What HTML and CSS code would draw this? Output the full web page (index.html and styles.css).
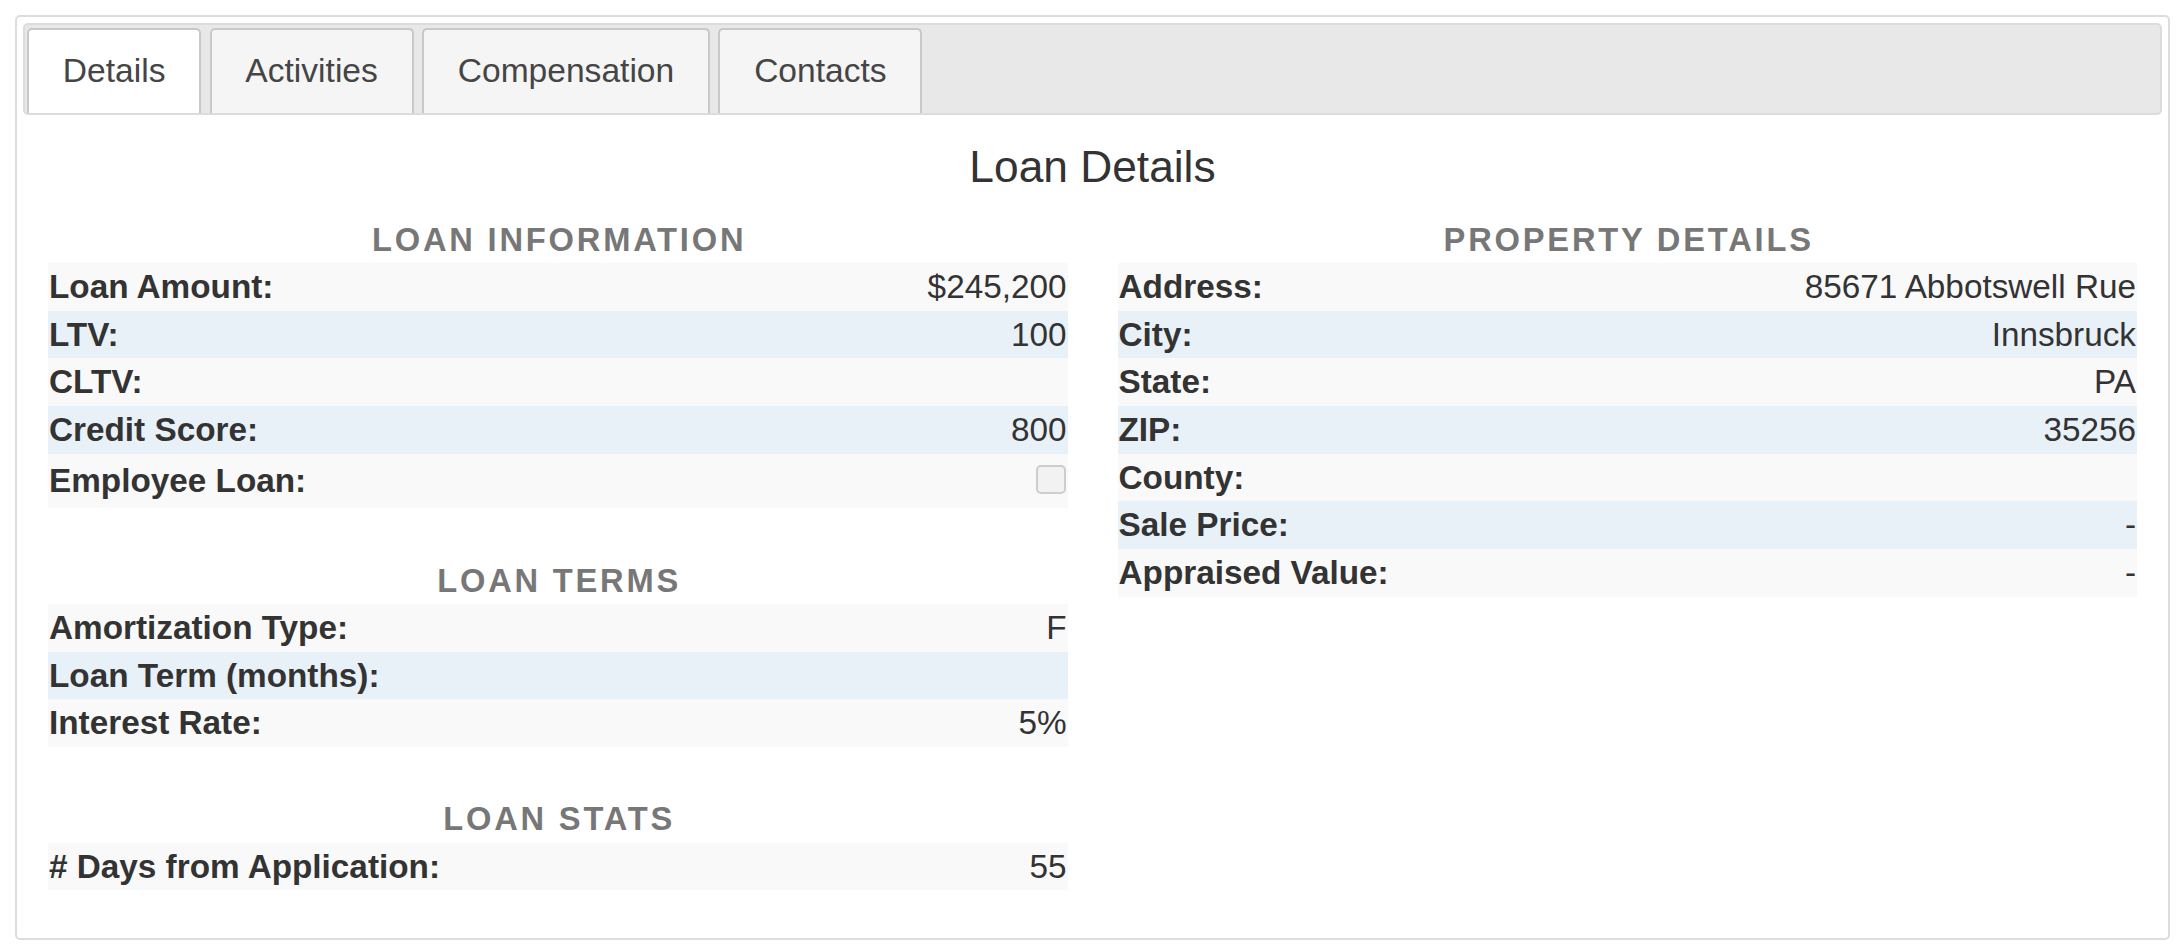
FILE: index.html
```html
<!DOCTYPE html>
<html lang="en">
<head>
<meta charset="utf-8">
<title>Loan Details</title>
<link rel="stylesheet" href="styles.css">
</head>
<body>
<div class="panel">
  <ul class="tabs">
    <li class="tab active">Details</li>
    <li class="tab">Activities</li>
    <li class="tab">Compensation</li>
    <li class="tab">Contacts</li>
  </ul>
  <div class="tab-body">
    <h2 class="title">Loan Details</h2>
    <div class="cols">
      <div class="col">
        <section class="group">
          <h3 class="group-title">LOAN INFORMATION</h3>
          <div class="rows">
            <div class="row"><span class="label">Loan Amount:</span><span class="value">$245,200</span></div>
            <div class="row"><span class="label">LTV:</span><span class="value">100</span></div>
            <div class="row"><span class="label">CLTV:</span><span class="value"></span></div>
            <div class="row"><span class="label">Credit Score:</span><span class="value">800</span></div>
            <div class="row"><span class="label">Employee Loan:</span><span class="checkbox"></span></div>
          </div>
        </section>
        <section class="group">
          <h3 class="group-title">LOAN TERMS</h3>
          <div class="rows">
            <div class="row"><span class="label">Amortization Type:</span><span class="value">F</span></div>
            <div class="row"><span class="label">Loan Term (months):</span><span class="value"></span></div>
            <div class="row"><span class="label">Interest Rate:</span><span class="value">5%</span></div>
          </div>
        </section>
        <section class="group">
          <h3 class="group-title">LOAN STATS</h3>
          <div class="rows">
            <div class="row"><span class="label"># Days from Application:</span><span class="value">55</span></div>
          </div>
        </section>
      </div>
      <div class="col">
        <section class="group">
          <h3 class="group-title">PROPERTY DETAILS</h3>
          <div class="rows">
            <div class="row"><span class="label">Address:</span><span class="value">85671 Abbotswell Rue</span></div>
            <div class="row"><span class="label">City:</span><span class="value">Innsbruck</span></div>
            <div class="row"><span class="label">State:</span><span class="value">PA</span></div>
            <div class="row"><span class="label">ZIP:</span><span class="value">35256</span></div>
            <div class="row"><span class="label">County:</span><span class="value"></span></div>
            <div class="row"><span class="label">Sale Price:</span><span class="value">-</span></div>
            <div class="row"><span class="label">Appraised Value:</span><span class="value">-</span></div>
          </div>
        </section>
      </div>
    </div>
  </div>
</div>
</body>
</html>
```

FILE: styles.css
```css
* {
  box-sizing: border-box;
}

body {
  margin: 0;
  font-family: "Liberation Sans", Arial, Helvetica, sans-serif;
  color: #333;
  background: #fff;
}

.panel {
  margin: 15px 8px 0 15px;
  height: 925px;
  border: 2px solid #ddd;
  border-radius: 5px;
  padding: 6px;
}

.tabs {
  list-style: none;
  margin: 0;
  padding: 3px 2px 0;
  height: 92px;
  display: flex;
  gap: 8.3px;
  background: #e8e8e8;
  border: 2px solid #dcdcdc;
  border-radius: 5px;
}

.tab {
  height: 85px;
  padding: 22px 33.8px 23px;
  font-size: 33.6px;
  line-height: 38px;
  color: #454545;
  background: #f5f5f5;
  border: 2px solid #c8c8c8;
  border-bottom: 0;
  border-radius: 5px 5px 0 0;
  white-space: nowrap;
}

.tab.active {
  background: #fff;
}

.title {
  margin: 26px 0 0;
  font-size: 44.3px;
  line-height: 51px;
  font-weight: normal;
  text-align: center;
  color: #333;
}

.cols {
  display: grid;
  grid-template-columns: 1fr 1fr;
  margin-top: 28.8px;
}

.col {
  padding: 0 25px;
}

.group {
  margin-bottom: 53.5px;
}

.group-title {
  margin: 0 0 4.2px;
  padding-left: 2.8px;
  font-size: 32.67px;
  line-height: 38px;
  font-weight: bold;
  letter-spacing: 2.8px;
  color: #777;
  text-align: center;
}

.row {
  display: flex;
  justify-content: space-between;
  align-items: center;
  min-height: 47.67px;
  padding: 0 1px;
  font-size: 33.3px;
  line-height: 47.67px;
  background: #f9f9f9;
}

.row:nth-child(even) {
  background: #e9f1f8;
}

.label {
  font-weight: bold;
  color: #333;
}

.value {
  color: #333;
}

.checkbox {
  width: 30px;
  height: 29px;
  margin: 11px 1px 14.5px 0;
  border: 2px solid #cdcdcd;
  border-radius: 5px;
  background: #f2f2f2;
}
```
